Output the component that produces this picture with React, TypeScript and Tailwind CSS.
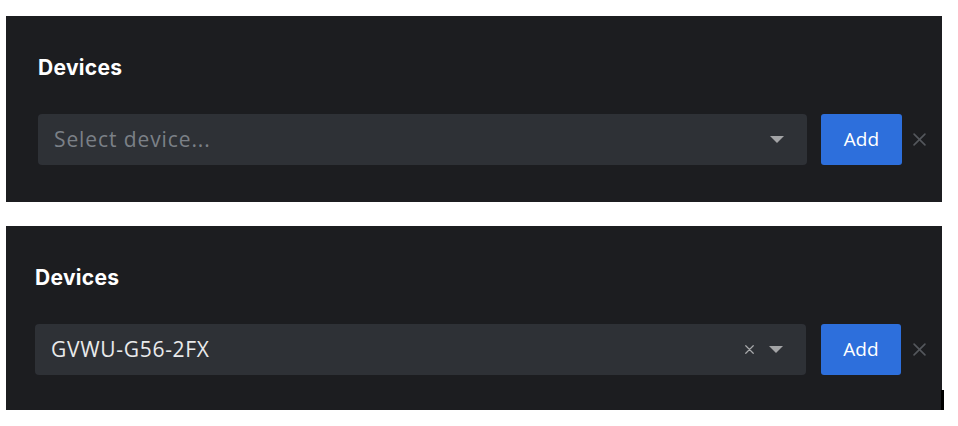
import { useState } from 'react';

type DevicePickerProps = {
  value?: string;
  shift?: boolean;
};

function Caret() {
  return (
    <svg width="14" height="8" viewBox="0 0 14 8" className="shrink-0">
      <path d="M0 0 L14 0 L7 7 Z" fill="#a3a4a6" />
    </svg>
  );
}

function CloseIcon({ size, color, stroke }: { size: number; color: string; stroke: number }) {
  return (
    <svg width={size} height={size} viewBox="0 0 12 12" className="shrink-0">
      <path d="M1 1 L11 11 M11 1 L1 11" stroke={color} strokeWidth={stroke} strokeLinecap="round" />
    </svg>
  );
}

function DevicePicker({ value, shift }: DevicePickerProps) {
  const [device, setDevice] = useState(value ?? '');

  return (
    <section
      className={
        shift
          ? 'relative ml-[6px] flex h-[184px] w-[936px] flex-col bg-[#1c1d20] pl-[29px] pt-[41px]'
          : 'relative ml-[6px] flex h-[186px] w-[936px] flex-col bg-[#1c1d20] pl-[32px] pt-[41px]'
      }
    >
      <h2 className="text-[21px] font-bold leading-none tracking-[0.3px] text-white [font-family:'Inter','Noto_Sans',sans-serif]">
        Devices
      </h2>

      <div className="mt-[36px] flex items-center">
        <div
          className={
            shift
              ? 'flex h-[51px] w-[771px] items-center rounded-[4px] bg-[#2e3136] pl-[16px] pr-[23px]'
              : 'flex h-[51px] w-[769px] items-center rounded-[4px] bg-[#2e3136] pl-[16px] pr-[23px]'
          }
        >
          <span
            className={
              device
                ? 'flex-1 text-[21px] tracking-[0.7px] text-[#e9eaeb] [font-family:"Open_Sans",sans-serif]'
                : 'flex-1 text-[21px] tracking-[0.9px] text-[#7b8087] [font-family:"Open_Sans",sans-serif]'
            }
          >
            {device || 'Select device...'}
          </span>
          {device && (
            <button type="button" onClick={() => setDevice('')} className="mr-[15px] flex items-center">
              <CloseIcon size={9} color="#a8a9ab" stroke={1.6} />
            </button>
          )}
          <Caret />
        </div>

        <button
          type="button"
          className={
            shift
              ? 'ml-[15px] h-[51px] w-[80px] rounded-[3px] bg-[#2d6fdc] text-[19px] text-white [font-family:"Open_Sans",sans-serif]'
              : 'ml-[14px] h-[51px] w-[81px] rounded-[3px] bg-[#2d6fdc] text-[19px] text-white [font-family:"Open_Sans",sans-serif]'
          }
        >
          Add
        </button>

        <button type="button" className={shift ? 'ml-[12px] flex items-center' : 'ml-[11px] flex items-center'}>
          <CloseIcon size={13} color="#54575c" stroke={1.5} />
        </button>
      </div>

      {shift && <div className="absolute bottom-0 right-[-2px] h-[20px] w-[3px] bg-black" />}
    </section>
  );
}

export default function App() {
  return (
    <div className="h-[426px] w-[958px] bg-white pt-[16px]">
      <DevicePicker />
      <div className="h-[24px]" />
      <DevicePicker value="GVWU-G56-2FX" shift />
    </div>
  );
}
